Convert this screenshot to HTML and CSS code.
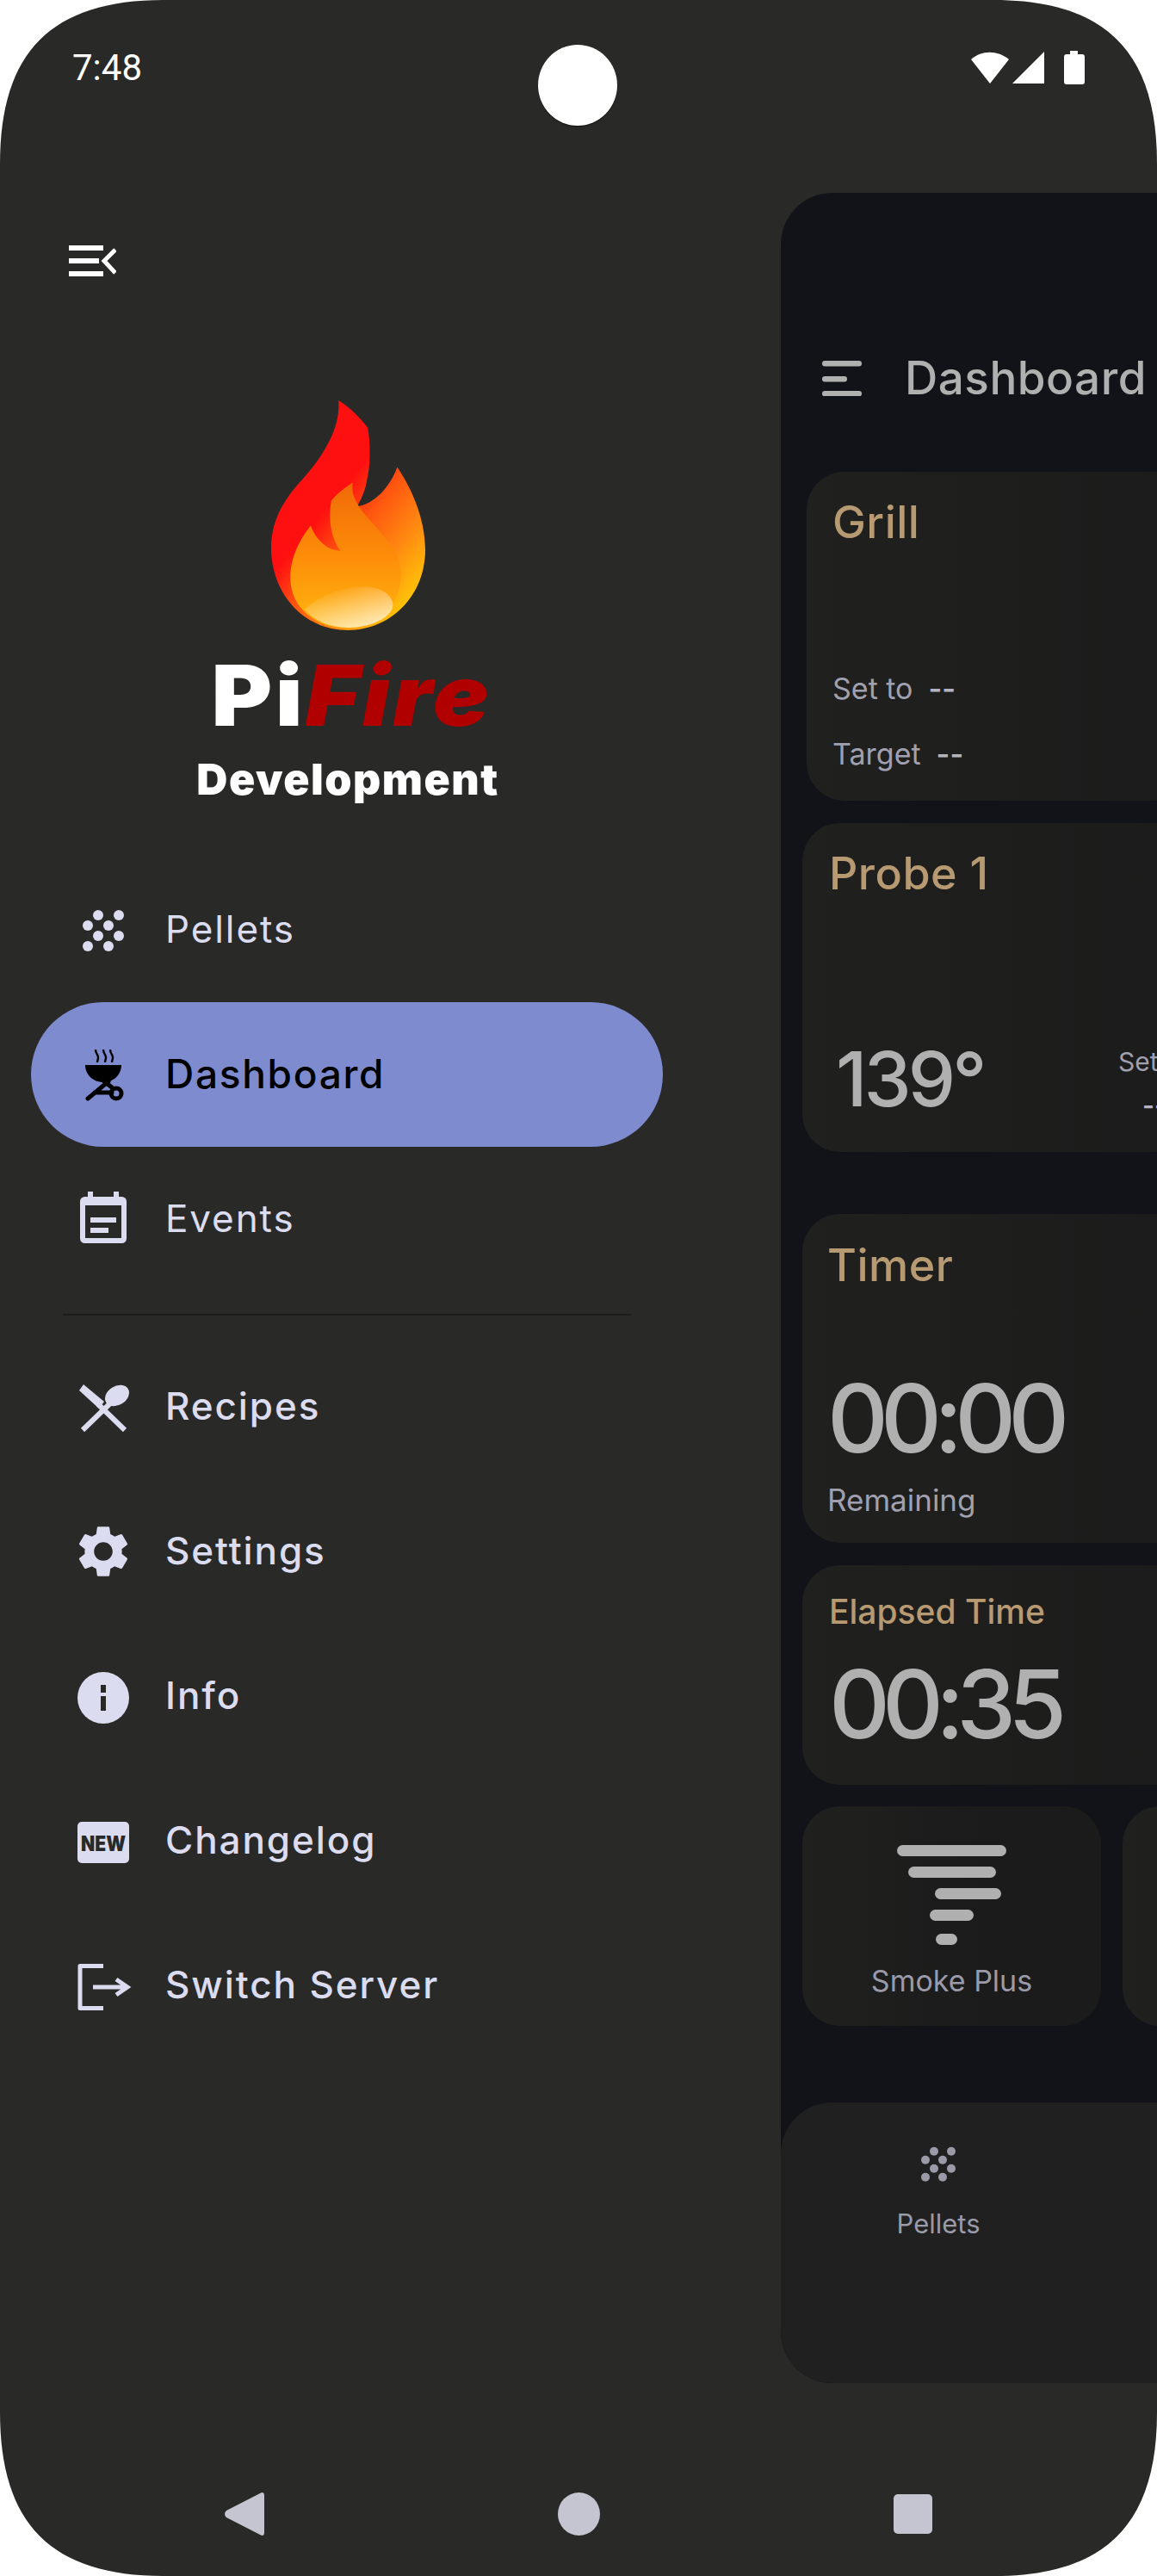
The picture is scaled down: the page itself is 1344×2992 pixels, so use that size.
FILE: index.html
```html
<!DOCTYPE html>
<html lang="en">
<head>
  <meta charset="UTF-8">
  <title>PiFire</title>
  <link rel="stylesheet" href="styles.css">
</head>
<body>
  <svg class="defs" width="0" height="0">
    <defs>
      <symbol id="pellets" viewBox="0 0 60 60">
        <circle cx="24" cy="13" r="6"/><circle cx="48" cy="13" r="6"/>
        <circle cx="12" cy="25" r="6"/><circle cx="36" cy="25" r="6"/>
        <circle cx="24" cy="37" r="6"/><circle cx="48" cy="37" r="6"/>
        <circle cx="12" cy="49" r="6"/><circle cx="36" cy="49" r="6"/>
      </symbol>
      <linearGradient id="flameOuter" gradientUnits="userSpaceOnUse" x1="600" y1="450" x2="930" y2="720">
        <stop offset="0" stop-color="#ff1010"/>
        <stop offset=".3" stop-color="#ff5510"/>
        <stop offset=".7" stop-color="#ff9010"/>
        <stop offset="1" stop-color="#ffc208"/>
      </linearGradient>
      <linearGradient id="flameInner" x1="0" y1="0" x2="0" y2="1">
        <stop offset="0" stop-color="#f06a08"/>
        <stop offset=".5" stop-color="#fd8c08"/>
        <stop offset="1" stop-color="#ffb810"/>
      </linearGradient>
      <linearGradient id="flameGlow" x1=".2" y1=".1" x2=".75" y2="1">
        <stop offset="0" stop-color="#fff" stop-opacity="0"/>
        <stop offset="1" stop-color="#fff" stop-opacity=".72"/>
      </linearGradient>
    </defs>
  </svg>

  <div class="phone">
    <div class="status">
      <span class="clock">7:48</span>
      <div class="status-icons">
        <svg width="46" height="40" viewBox="0 0 46 40"><path d="M1 10 C13 -1 32 -1 45 10 L23 38Z"/></svg>
        <svg width="38" height="40" viewBox="0 0 38 40"><path d="M37 1V38H0Z"/></svg>
        <svg width="24" height="40" viewBox="0 0 24 40"><path d="M7 0H16V4H21Q24 4 24 7V36Q24 39 21 39H3Q0 39 0 36V7Q0 4 3 4H7Z"/></svg>
      </div>
      <div class="camera"></div>
    </div>

    <div class="content">
      <aside class="drawer">
        <svg class="drawer-close" width="55" height="36" viewBox="0 0 55 36">
          <rect x="0" y="0" width="40" height="6"/><rect x="0" y="15" width="35" height="6"/><rect x="0" y="30" width="40" height="6"/>
          <path d="M54 5 L41 18 L54 32" fill="none" stroke="#fff" stroke-width="5"/>
        </svg>

        <div class="logo">
          <svg class="flame" width="179" height="267" viewBox="405 75 538 802">
            <path fill="url(#flameOuter)" d="M640 75C680 100 715 135 742 170C752 220 752 300 740 350C735 385 720 420 705 445C760 440 820 380 845 308C890 375 943 480 943 600C940 770 810 877 675 877C510 877 405 740 405 590C405 480 465 405 510 355C570 290 650 180 640 75Z"/>
            <path fill="url(#flameInner)" d="M690 362C670 375 635 400 615 425C605 480 610 550 647 600C600 598 560 560 543 512C505 560 470 625 472 700C475 800 560 870 675 870C780 870 858 790 858 680C858 610 800 550 760 505C720 460 680 415 690 362Z"/>
            <path fill="url(#flameGlow)" d="M522 805C570 760 650 725 730 725C790 728 830 755 830 790C825 835 750 868 675 868C610 868 560 845 522 805Z"/>
          </svg>
          <div class="brand">Pi<em>Fire</em></div>
          <div class="brand-sub">Development</div>
        </div>

        <nav class="menu">
          <a class="menu-item light"><svg class="icon" viewBox="0 0 60 60"><use href="#pellets"/></svg>Pellets</a>
          <a class="menu-item light active">
            <svg class="icon" viewBox="0 0 60 60">
              <path d="M21 1c0 5 3 6 3 9s-1 4-1 6M30 1c0 5 3 6 3 9s-1 4-1 6M38 1c0 5 3 6 3 9s-1 4-1 6" fill="none" stroke="#000" stroke-width="2.4"/>
              <path d="M9 19H51C51 30 42 39 30 39C18 39 9 30 9 19Z"/>
              <path d="M36 38L12 58M20 51H40M31 38L40 45" fill="none" stroke="#000" stroke-width="5" stroke-linecap="round"/>
              <circle cx="45" cy="52" r="6" fill="none" stroke="#000" stroke-width="5"/>
            </svg>Dashboard</a>
          <a class="menu-item light">
            <svg class="icon" viewBox="0 0 60 60">
              <rect x="6" y="7" width="48" height="48" rx="2.5" fill="none" stroke="#dcdcf0" stroke-width="6"/>
              <rect x="9" y="7" width="42" height="7"/>
              <rect x="12" y="-2" width="6" height="7"/><rect x="42" y="-2" width="6" height="7"/>
              <rect x="15" y="28" width="30" height="6"/><rect x="15" y="40" width="21" height="6"/>
            </svg>Events</a>

          <div class="divider"></div>

          <a class="menu-item">
            <svg class="icon" viewBox="0 0 60 60">
              <ellipse cx="46" cy="17" rx="15" ry="11" transform="rotate(-32 46 17)"/>
              <path d="M38 26L6 57" fill="none" stroke="#dcdcf0" stroke-width="6"/>
              <path d="M7 4L31 24L25 32L2 11Z"/>
              <path d="M24 27L55 57" fill="none" stroke="#dcdcf0" stroke-width="6"/>
            </svg>Recipes</a>
          <a class="menu-item">
            <svg class="icon" viewBox="2 2 20 20">
              <path d="M19.14 12.94c.04-.3.06-.61.06-.94 0-.32-.02-.64-.07-.94l2.03-1.58c.18-.14.23-.41.12-.61l-1.92-3.32c-.12-.22-.37-.29-.59-.22l-2.39.96c-.5-.38-1.03-.7-1.62-.94l-.36-2.54c-.04-.24-.24-.41-.48-.41h-3.84c-.24 0-.43.17-.47.41l-.36 2.54c-.59.24-1.13.57-1.62.94l-2.39-.96c-.22-.08-.47 0-.59.22L2.74 8.87c-.12.21-.08.47.12.61l2.03 1.58c-.05.3-.09.63-.09.94s.02.64.07.94l-2.03 1.58c-.18.14-.23.41-.12.61l1.92 3.32c.12.22.37.29.59.22l2.39-.96c.5.38 1.03.7 1.62.94l.36 2.54c.05.24.24.41.48.41h3.84c.24 0 .44-.17.47-.41l.36-2.54c.59-.24 1.13-.56 1.62-.94l2.39.96c.22.08.47 0 .59-.22l1.92-3.32c.12-.22.07-.47-.12-.61l-2.01-1.58zM12 15.6c-1.98 0-3.6-1.62-3.6-3.6s1.62-3.6 3.6-3.6 3.6 1.62 3.6 3.6-1.62 3.6-3.6 3.6z"/>
            </svg>Settings</a>
          <a class="menu-item">
            <svg class="icon" viewBox="0 0 60 60">
              <circle cx="30" cy="32" r="30"/>
              <rect x="27" y="17" width="6" height="9" fill="#292928"/><rect x="27" y="30" width="6" height="17" fill="#292928"/>
            </svg>Info</a>
          <a class="menu-item">
            <svg class="icon" viewBox="0 0 60 60">
              <rect x="0" y="8" width="60" height="48" rx="5"/>
              <text class="new-tag" x="4" y="42" textLength="52" lengthAdjust="spacingAndGlyphs">NEW</text>
            </svg>Changelog</a>
          <a class="menu-item">
            <svg class="icon" viewBox="0 0 60 60">
              <path d="M30 7.500H3V56.500H30" fill="none" stroke="#dcdcf0" stroke-width="5" stroke-linejoin="round"/>
              <path d="M18 32H57M45 23L58 32L45 41" fill="none" stroke="#dcdcf0" stroke-width="5"/>
            </svg>Switch Server</a>
        </nav>
      </aside>

      <main class="panel">
        <header class="panel-head">
          <svg class="burger" width="46" height="41" viewBox="0 0 46 41">
            <rect x="0" y="0" width="46" height="6.500" rx="3.200"/>
            <rect x="0" y="18" width="29" height="6.500" rx="3.200"/>
            <rect x="0" y="35" width="46" height="6.500" rx="3.200"/>
          </svg>
          <h1 class="panel-title">Dashboard</h1>
        </header>

        <section class="card tall grill">
          <div class="card-title">Grill</div>
          <div class="card-rows">
            <div class="stat-row"><span>Set to</span><b>--</b></div>
            <div class="stat-row"><span>Target</span><b>--</b></div>
          </div>
        </section>

        <section class="card tall probe">
          <div class="card-title">Probe 1</div>
          <div class="probe-row">
            <div class="temp">139°</div>
            <div class="probe-set"><span>Set</span><b>--</b></div>
          </div>
        </section>

        <section class="card tall timer">
          <div class="card-title">Timer</div>
          <div class="big-time">00:00</div>
          <div class="time-note">Remaining</div>
        </section>

        <section class="card short elapsed">
          <div class="card-title small">Elapsed Time</div>
          <div class="big-time">00:35</div>
        </section>

        <div class="buttons">
          <section class="card short smoke">
            <svg class="smoke-icon" width="127" height="116" viewBox="0 0 127 116">
              <rect x="0" y="0" width="127" height="13" rx="6.500"/>
              <rect x="13" y="25" width="102" height="13" rx="6.500"/>
              <rect x="44" y="50" width="77" height="13" rx="6.500"/>
              <rect x="38" y="75" width="51" height="13" rx="6.500"/>
              <rect x="45" y="103" width="25" height="13" rx="6.500"/>
            </svg>
            <div class="smoke-label">Smoke Plus</div>
          </section>
          <section class="card short next"></section>
        </div>

        <footer class="bottom-nav">
          <div class="bottom-item">
            <svg class="bottom-icon" viewBox="0 0 60 60"><use href="#pellets"/></svg>
            <span>Pellets</span>
          </div>
        </footer>
      </main>
    </div>

    <div class="navbar">
      <svg width="46" height="50" viewBox="0 0 46 50"><path d="M41 1L2 21Q-2 25 2 29L41 49Q46 52 46 46V4Q46 -2 41 1Z"/></svg>
      <div class="home"></div>
      <div class="square"></div>
    </div>
  </div>
</body>
</html>
```

FILE: styles.css
```css
* {
  box-sizing: border-box;
}

body {
  margin: 0;
  background: white;
  font-family: Inter, "Noto Sans", sans-serif;
}

.defs {
  position: absolute;
}

.phone {
  position: relative;
  width: 1344px;
  height: 2992px;
  background: #292928;
  overflow: hidden;
  clip-path: path("M0 190C0 60 60 0 190 0H1154C1284 0 1344 60 1344 190V2802C1344 2932 1284 2992 1154 2992H190C60 2992 0 2932 0 2802Z");
}

/* status bar */
.status {
  height: 224px;
  display: flex;
  justify-content: space-between;
  padding: 55px 84px 0 84px;
  color: white;
}

.clock {
  font-family: Roboto, sans-serif;
  font-size: 42px;
  line-height: 48px;
}

.status-icons {
  display: flex;
  gap: 3px;
  height: 40px;
  margin-top: 4px;
  fill: white;
}

.status-icons svg:last-child {
  margin-left: 19px;
}

.camera {
  position: absolute;
  left: 625px;
  top: 52px;
  width: 92px;
  height: 94px;
  border-radius: 50%;
  background: white;
  box-shadow: 0 1px 1px #111;
}

.content {
  display: flex;
  height: 2544px;
}

/* left drawer */
.drawer {
  width: 907px;
  padding-top: 61px;
}

.drawer-close {
  display: block;
  margin-left: 80px;
  fill: white;
}

.logo {
  width: 808px;
  height: 675px;
  padding-top: 144px;
  display: flex;
  flex-direction: column;
  align-items: center;
}

.flame {
  display: block;
}

.brand {
  margin-top: 28px;
  font-size: 98px;
  line-height: 96px;
  font-weight: 900;
  color: white;
  letter-spacing: 3px;
  padding-left: 8px;
  transform: scaleX(1.1);
}

.brand em {
  color: #b00000;
}

.brand-sub {
  margin-top: 19px;
  font-size: 50px;
  line-height: 60px;
  font-weight: 900;
  color: white;
  letter-spacing: 1.5px;
}

.menu {
  width: 734px;
  margin-left: 36px;
}

.menu-item {
  display: flex;
  align-items: center;
  gap: 42px;
  height: 168px;
  padding: 0 0 2px 54px;
  border-radius: 84px;
  font-size: 44px;
  font-weight: 500;
  letter-spacing: 1.900px;
  color: #dcdcf0;
  fill: #dcdcf0;
}

.menu-item .icon {
  margin-top: 2px;
}

.menu-item.light {
  font-weight: 400;
}

.menu-item.active {
  background: #7e8ccf;
  color: black;
  fill: black;
  font-weight: 500;
  font-size: 46px;
  letter-spacing: 1.700px;
}

.icon {
  width: 60px;
  height: 60px;
  overflow: visible;
  flex: none;
}

.new-tag {
  font-size: 24px;
  font-weight: 900;
  letter-spacing: 0;
  fill: #292928;
}

.divider {
  height: 2px;
  margin: 26px 37px 22px;
  background: #1c1c1c;
}

/* dashboard behind the drawer */
.panel {
  width: 437px;
  height: 2544px;
  overflow: hidden;
  background: #121318;
  border-radius: 60px 0 0 60px;
}

.panel-head {
  display: flex;
  align-items: center;
  height: 324px;
  padding: 106px 0 0 48px;
}

.burger {
  fill: #b0b0b0;
  flex: none;
}

.panel-title {
  margin: 0 0 0 50px;
  font-size: 53px;
  font-weight: 500;
  letter-spacing: .5px;
  color: #b0b0b0;
  white-space: nowrap;
}

.card {
  width: 800px;
  margin-left: 25px;
  border-radius: 44px;
  background: linear-gradient(90deg, #20201f, #1b1b1b 60%);
  display: flex;
  flex-direction: column;
  color: #a0a0b0;
}

.tall {
  height: 382px;
  margin-bottom: 26px;
}

.short {
  height: 255px;
  margin-bottom: 25px;
}

.card-title {
  font-size: 52px;
  font-weight: 500;
  letter-spacing: .5px;
  line-height: 52px;
  color: #b89a72;
}

.card-title.small {
  font-size: 39px;
  line-height: 40px;
  letter-spacing: 0;
}

.grill {
  margin-left: 30px;
  padding: 33px 0 17px 30px;
}

.card-rows {
  margin-top: auto;
}

.stat-row {
  display: flex;
  align-items: center;
  gap: 18px;
  height: 76px;
  font-size: 34px;
}

.stat-row b {
  font-weight: 600;
  color: #b4b4c0;
}

.probe {
  padding: 33px 0 0 31px;
  margin-bottom: 72px;
}

.probe-row {
  display: flex;
  margin-top: auto;
  height: 135px;
}

.temp {
  width: 336px;
  padding-left: 8px;
  font-size: 88px;
  font-weight: 500;
  line-height: 100px;
  letter-spacing: -4px;
  color: #b0b0b0;
}

.probe-set {
  display: flex;
  flex-direction: column;
  font-size: 30px;
  line-height: 60px;
}

.probe-set b {
  margin-top: -9px;
  padding-left: 28px;
  font-weight: 600;
  color: #b4b4c0;
}

.timer {
  padding: 34px 0 0 29px;
}

.big-time {
  font-size: 110px;
  font-weight: 500;
  line-height: 120px;
  letter-spacing: -9px;
  color: #b0b0b0;
}

.timer .big-time {
  margin-top: 91px;
}

.time-note {
  margin-top: 15px;
  font-size: 35px;
  line-height: 40px;
}

.elapsed {
  padding: 34px 0 0 31px;
}

.elapsed .big-time {
  margin-top: 27px;
}

.buttons {
  display: flex;
  gap: 25px;
  width: 800px;
  margin-left: 25px;
}

.buttons .card {
  margin: 0;
  flex: none;
}

.smoke {
  width: 347px;
  align-items: center;
  padding-top: 45px;
}

.next {
  width: 347px;
}

.smoke-icon {
  fill: #b0b0b0;
  flex: none;
}

.smoke-label {
  margin-top: 22px;
  font-size: 34px;
  line-height: 40px;
  color: #9a9aaa;
}

.bottom-nav {
  width: 800px;
  height: 326px;
  margin-top: 89px;
  border-radius: 60px;
  background: #202020;
  padding-top: 46px;
}

.bottom-item {
  width: 366px;
  display: flex;
  flex-direction: column;
  align-items: center;
  font-size: 31px;
  color: #9a9aa8;
}

.bottom-icon {
  width: 50px;
  height: 50px;
  fill: #9a9aa8;
}

.bottom-item span {
  margin-top: 26px;
}

/* android buttons */
.navbar {
  display: flex;
  justify-content: center;
  align-items: center;
  gap: 341px;
  height: 224px;
  padding-top: 80px;
  fill: #c5c5d2;
}

.home {
  width: 49px;
  height: 50px;
  border-radius: 50%;
  background: #c5c5d2;
}

.square {
  width: 45px;
  height: 46px;
  border-radius: 5px;
  background: #c5c5d2;
}
```
